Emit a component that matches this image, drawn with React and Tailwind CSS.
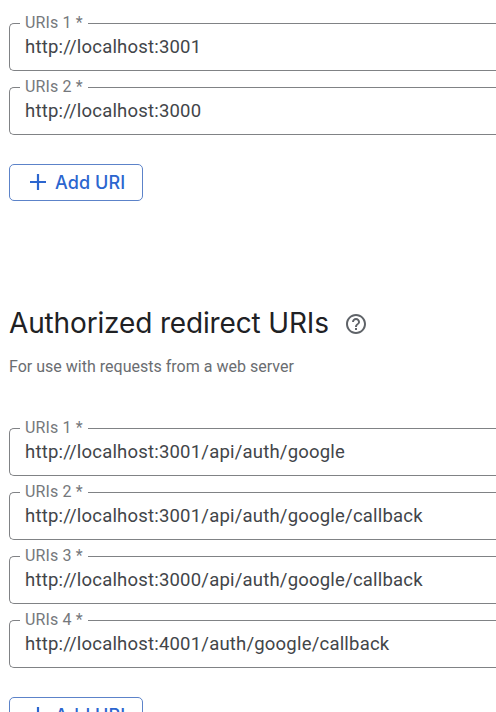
const origins = ["http://localhost:3001", "http://localhost:3000"];

const redirects = [
  "http://localhost:3001/api/auth/google",
  "http://localhost:3001/api/auth/google/callback",
  "http://localhost:3000/api/auth/google/callback",
  "http://localhost:4001/auth/google/callback",
];

function UriField({ index, value }) {
  return (
    <div className="relative flex h-12 items-center rounded-l-[5px] border border-r-0 border-[#808285] pl-[15px]">
      <label className="absolute -top-[11px] left-[10px] w-[68px] bg-white pl-[5px] text-[16px] leading-5 tracking-[0.15px] whitespace-nowrap text-[#75787c]">
        URIs {index} *
      </label>
      <span className="text-[18.5px] leading-6 tracking-[0.2px] whitespace-nowrap text-[#424549]">{value}</span>
    </div>
  );
}

function UriList({ values }) {
  return (
    <div className="flex flex-col gap-4">
      {values.map((value, i) => (
        <UriField key={i} index={i + 1} value={value} />
      ))}
    </div>
  );
}

function AddButton() {
  return (
    <button className="flex h-[37px] w-[134px] shrink-0 items-center rounded-[5px] border border-[#5c83c9] pl-5 font-['Inter',sans-serif] text-[18px] font-medium tracking-[0.08px] text-[#2c66cf]">
      <svg className="mr-[9px] mb-px size-4 shrink-0" viewBox="0 0 16 16" stroke="currentColor" strokeWidth="2.2">
        <path d="M8 0v16M0 8h16" />
      </svg>
      <span className="whitespace-nowrap">Add URI</span>
    </button>
  );
}

export default function App() {
  return (
    <main className="h-[712px] overflow-hidden bg-white pt-[23px] pl-[9px] font-['Roboto',sans-serif]">
      <UriList values={origins} />
      <div className="mt-[29px]">
        <AddButton />
      </div>
      <div className="mt-[104px] flex h-9 items-center">
        <h2 className="w-[337px] font-['Inter',sans-serif] text-[28px] leading-9 font-normal tracking-[-0.15px] whitespace-nowrap text-[#202124]">
          Authorized redirect URIs
        </h2>
        <svg className="mt-[2px] size-5 shrink-0 text-[#5f6368]" viewBox="2 2 20 20" fill="currentColor">
          <path d="M11 18h2v-2h-2v2zm1-16C6.48 2 2 6.48 2 12s4.48 10 10 10 10-4.480 10-10S17.520 2 12 2zm0 18c-4.410 0-8-3.590-8-8s3.590-8 8-8 8 3.590 8 8-3.590 8-8 8zm0-14c-2.210 0-4 1.790-4 4h2c0-1.100.9-2 2-2s2 .9 2 2c0 2-3 1.750-3 5h2c0-2.250 3-2.500 3-5 0-2.210-1.790-4-4-4z" />
        </svg>
      </div>
      <p className="mt-[14px] text-[16px] leading-6 tracking-[0.01px] text-[#6a6d71]">
        For use with requests from a web server
      </p>
      <div className="mt-[49px]">
        <UriList values={redirects} />
      </div>
      <div className="mt-[29px]">
        <AddButton />
      </div>
    </main>
  );
}
